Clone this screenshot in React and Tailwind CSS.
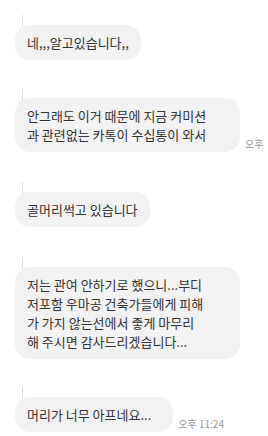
import React from 'react'

const messages = [
  { lines: ['네,,,알고있습니다,,'], gapTop: 25 },
  { lines: ['안그래도 이거 때문에 지금 커미션', '과 관련없는 카톡이 수십통이 와서'], gapTop: 38, time: '오후', wide: true },
  { lines: ['골머리썩고 있습니다'], gapTop: 40 },
  {
    lines: [
      '저는 관여 안하기로 했으니...부디',
      '저포함 우마공 건축가들에게 피해',
      '가 가지 않는선에서 좋게 마무리',
      '해 주시면 감사드리겠습니다...',
    ],
    gapTop: 40,
    wide: true,
  },
  { lines: ['머리가 너무 아프네요...'], gapTop: 38, time: '오후 11:24', extra: true },
]

function Bubble({ msg }) {
  return (
    <div className="relative flex items-end" style={{ marginTop: msg.gapTop }}>
      {/* leftover edge of the cropped profile column */}
      <div className="absolute left-[7px] -top-[10px] w-px h-[12px] bg-[#dcdcdc]" />
      <div
        className={
          'bg-[#f2f2f2] rounded-[15px] pl-3 pt-[8px] pb-[8px] text-[#333] text-[13px] leading-[19px] whitespace-nowrap ' +
          (msg.wide ? 'w-[225px] pr-3 ' : '') +
          (msg.extra ? 'pr-[22px]' : 'pr-3')
        }
      >
        {msg.lines.map((l, i) => (
          <div key={i}>{l}</div>
        ))}
      </div>
      {msg.time && (
        <span className="ml-[5px] mb-[1px] text-[10px] leading-[14px] text-[#9a9a9a] whitespace-nowrap">
          {msg.time}
        </span>
      )}
    </div>
  )
}

export default function App() {
  return (
    <div
      className="w-[268px] h-[436px] overflow-hidden bg-white pl-[15px]"
      style={{ fontFamily: '"Noto Sans CJK KR", "Noto Sans", sans-serif' }}
    >
      <div className="flex flex-col">
        {messages.map((m, i) => (
          <Bubble key={i} msg={m} />
        ))}
      </div>
    </div>
  )
}
